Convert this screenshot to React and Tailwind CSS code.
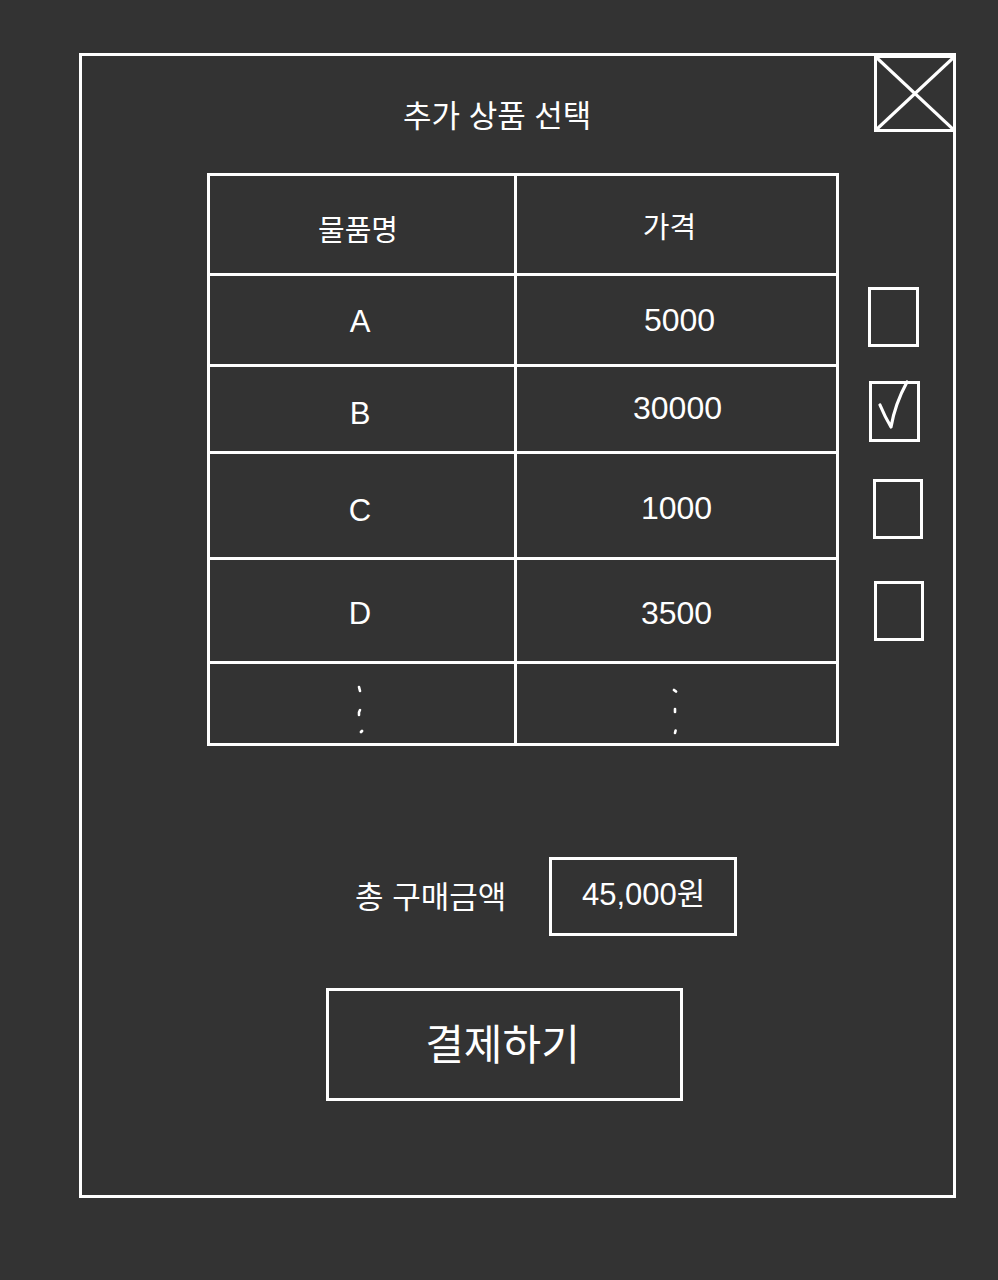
import React from "react";

const rows = [
  { name: "A", price: "5000", h: "h-[91px]", pt: "pt-[3px]", pp: "pt-0 pl-[6px]" },
  { name: "B", price: "30000", h: "h-[87px]", pt: "pt-[8px]", pp: "pb-[2px] pl-[2px]" },
  { name: "C", price: "1000", h: "h-[106px]", pt: "pt-[10px]", pp: "pt-[4px]" },
  { name: "D", price: "3500", h: "h-[104px]", pt: "pt-[5px]", pp: "pt-[5px]" },
];

function Dots() {
  return (
    <svg width="10" height="54" viewBox="0 0 10 54" className="block">
      <path d="M4 3 L5 7" stroke="white" strokeWidth="2.6" strokeLinecap="round" fill="none" />
      <path d="M4 31 Q3.5 28 5 26" stroke="white" strokeWidth="2.6" strokeLinecap="round" fill="none" />
      <path d="M6 48 L7 47" stroke="white" strokeWidth="2.8" strokeLinecap="round" fill="none" />
    </svg>
  );
}

function Dots2() {
  return (
    <svg width="10" height="54" viewBox="0 0 10 54" className="block">
      <path d="M4 4 L6 5.5" stroke="white" strokeWidth="2.8" strokeLinecap="round" fill="none" />
      <path d="M5 23 L5 26" stroke="white" strokeWidth="2.6" strokeLinecap="round" fill="none" />
      <path d="M5 47 L5.6 44.5" stroke="white" strokeWidth="2.6" strokeLinecap="round" fill="none" />
    </svg>
  );
}

export default function App() {
  return (
    <div className="w-[998px] h-[1280px] bg-[#333333] pt-[53px] pl-[79px] font-['Liberation_Sans','Noto_Sans_CJK_KR',sans-serif] text-white">
      <div className="relative w-[877px] h-[1145px] border-[3px] border-white">
        {/* close box */}
        <div className="absolute top-[-1px] right-[-3px] w-[82px] h-[77px] border-[3px] border-white">
          <svg className="absolute inset-0" width="76" height="71" viewBox="0 0 76 71">
            <line x1="0" y1="0" x2="78" y2="73" stroke="white" strokeWidth="3.2" />
            <line x1="76" y1="0" x2="0" y2="71" stroke="white" strokeWidth="3.2" />
          </svg>
        </div>

        {/* title */}
        <div className="mt-[40px] pl-[321px] h-[42px] leading-[42px] text-[31px]">
          추가 상품 선택
        </div>

        {/* table + checkboxes */}
        <div className="mt-[35px] ml-[125px] flex items-start">
          <div className="w-[632px] border-[3px] border-white">
            <div className="flex h-[97px]">
              <div className="w-[307px] border-r-[3px] border-white flex items-center justify-center pt-[14px] pr-[8px] text-[29px] leading-none">
                물품명
              </div>
              <div className="flex-1 flex items-center justify-center pt-[8px] pr-[14px] text-[29px] leading-none">
                가격
              </div>
            </div>
            {rows.map((r) => (
              <div key={r.name} className={`flex border-t-[3px] border-white ${r.h}`}>
                <div className={`w-[307px] border-r-[3px] border-white flex items-center justify-center text-[31px] leading-none pr-[4px] ${r.pt}`}>
                  {r.name}
                </div>
                <div className={`flex-1 flex items-center justify-center text-[32px] leading-none ${r.pp}`}>
                  {r.price}
                </div>
              </div>
            ))}
            <div className="flex border-t-[3px] border-white h-[82px]">
              <div className="w-[307px] border-r-[3px] border-white flex justify-center pt-[20px] pr-[4px]">
                <Dots />
              </div>
              <div className="flex-1 flex justify-center pt-[22px] pr-[4px]">
                <Dots2 />
              </div>
            </div>
          </div>

          <div className="flex flex-col">
            <div className="mt-[114px] ml-[29px] w-[51px] h-[60px] border-[3px] border-white" />
            <div className="relative mt-[34px] ml-[30px] w-[51px] h-[61px] border-[3px] border-white">
              <svg className="absolute left-0 top-0 overflow-visible" width="45" height="55" viewBox="0 0 45 55">
                <path d="M8 21 Q13 33 19 43 Q23 20 35 -2" stroke="white" strokeWidth="3.2" strokeLinecap="round" strokeLinejoin="round" fill="none" />
              </svg>
            </div>
            <div className="mt-[37px] ml-[34px] w-[50px] h-[60px] border-[3px] border-white" />
            <div className="mt-[42px] ml-[35px] w-[50px] h-[60px] border-[3px] border-white" />
          </div>
        </div>

        {/* total */}
        <div className="mt-[111px] ml-[273px] flex items-center">
          <div className="text-[31px] leading-none pt-[2px] w-[148px] whitespace-nowrap">총 구매금액</div>
          <div className="ml-[46px] w-[188px] h-[79px] border-[3px] border-white flex items-center pl-[30px] pb-[4px] text-[31px] leading-none whitespace-nowrap">
            45,000원
          </div>
        </div>

        {/* button */}
        <div className="mt-[52px] ml-[244px] w-[357px] h-[113px] border-[3px] border-white flex items-center justify-center text-[42px] leading-none pt-[2px] pr-[4px]">
          결제하기
        </div>
      </div>
    </div>
  );
}
